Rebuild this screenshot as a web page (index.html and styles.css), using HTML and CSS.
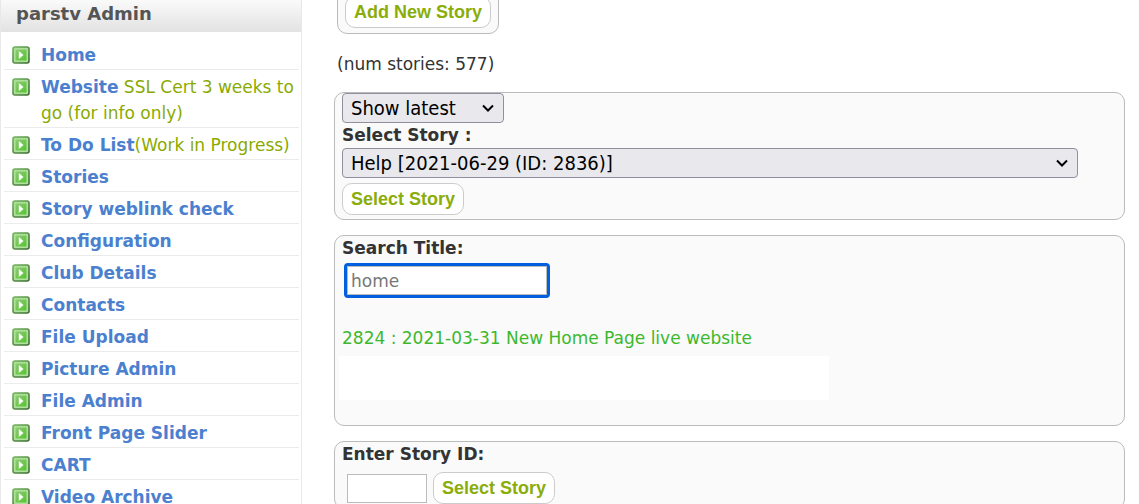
FILE: index.html
```html
<!DOCTYPE html>
<html lang="en">
<head>
    <meta charset="UTF-8">
    <meta name="viewport" content="width=device-width, initial-scale=1.0">
    <title>parstv Admin</title>
    <link rel="stylesheet" href="styles.css">
</head>
<body>
    <!-- Bullet used by every menu item -->
    <svg class="defs" width="0" height="0" aria-hidden="true">
        <linearGradient id="bulletFill" x1="0" y1="0" x2="1" y2="1">
            <stop offset="0" stop-color="#8fca78"/>
            <stop offset="1" stop-color="#52c42c"/>
        </linearGradient>
        <linearGradient id="bulletEdge" x1="0" y1="0" x2="1" y2="1">
            <stop offset="0" stop-color="#6fb45c"/>
            <stop offset="1" stop-color="#3c6b31"/>
        </linearGradient>
        <symbol id="bullet" viewBox="0 0 18 18">
            <rect x="1" y="1" width="16" height="16" rx="2" fill="#a9dd94" stroke="url(#bulletEdge)" stroke-width="1.6"/>
            <rect x="3" y="3" width="12" height="12" rx="1" fill="url(#bulletFill)" stroke="#b5e3a2" stroke-width="1"/>
            <path d="M6.8 5 L11.5 9 L6.8 13 Z" fill="#fff"/>
        </symbol>
        <symbol id="chevron" viewBox="0 0 12 8">
            <path d="M1 1.5 L6 6.5 L11 1.5" fill="none" stroke="#000" stroke-width="2"/>
        </symbol>
    </svg>

    <div class="page">
        <!-- Side menu -->
        <nav class="sidebar">
            <h2 class="sidebar-title">parstv Admin</h2>
            <ul class="menu">
                <li><svg class="bullet"><use href="#bullet"/></svg><div><a href="#">Home</a></div></li>
                <li><svg class="bullet"><use href="#bullet"/></svg><div><a href="#">Website</a> SSL Cert 3 weeks to go (for info only)</div></li>
                <li><svg class="bullet"><use href="#bullet"/></svg><div><a href="#">To Do List</a>(Work in Progress)</div></li>
                <li><svg class="bullet"><use href="#bullet"/></svg><div><a href="#">Stories</a></div></li>
                <li><svg class="bullet"><use href="#bullet"/></svg><div><a href="#">Story weblink check</a></div></li>
                <li><svg class="bullet"><use href="#bullet"/></svg><div><a href="#">Configuration</a></div></li>
                <li><svg class="bullet"><use href="#bullet"/></svg><div><a href="#">Club Details</a></div></li>
                <li><svg class="bullet"><use href="#bullet"/></svg><div><a href="#">Contacts</a></div></li>
                <li><svg class="bullet"><use href="#bullet"/></svg><div><a href="#">File Upload</a></div></li>
                <li><svg class="bullet"><use href="#bullet"/></svg><div><a href="#">Picture Admin</a></div></li>
                <li><svg class="bullet"><use href="#bullet"/></svg><div><a href="#">File Admin</a></div></li>
                <li><svg class="bullet"><use href="#bullet"/></svg><div><a href="#">Front Page Slider</a></div></li>
                <li><svg class="bullet"><use href="#bullet"/></svg><div><a href="#">CART</a></div></li>
                <li><svg class="bullet"><use href="#bullet"/></svg><div><a href="#">Video Archive</a></div></li>
            </ul>
        </nav>

        <!-- Story forms -->
        <main class="content">
            <form class="box add-box">
                <button type="button" class="btn">Add New Story</button>
            </form>

            <p class="count">(num stories: 577)</p>

            <form class="box select-box">
                <div class="select select-filter">
                    <select aria-label="Filter stories">
                        <option>Show latest</option>
                    </select>
                    <svg class="chevron"><use href="#chevron"/></svg>
                </div>
                <label class="label" for="story">Select Story :</label>
                <div class="select select-story">
                    <select id="story">
                        <option>Help [2021-06-29 (ID: 2836)]</option>
                    </select>
                    <svg class="chevron"><use href="#chevron"/></svg>
                </div>
                <button type="button" class="btn">Select Story</button>
            </form>

            <form class="box search-box">
                <label class="label" for="search">Search Title:</label>
                <input class="field search-field" type="text" id="search" value="home">
                <a class="result" href="#">2824 : 2021-03-31 New Home Page live website</a>
                <div class="blank"></div>
            </form>

            <form class="box">
                <label class="label" for="storyId">Enter Story ID:</label>
                <div class="id-row">
                    <input class="field id-field" type="text" id="storyId">
                    <button type="button" class="btn">Select Story</button>
                </div>
            </form>
        </main>
    </div>
</body>
</html>
```
FILE: styles.css
```css
* {
    margin: 0;
    padding: 0;
    box-sizing: border-box;
}

body {
    background: #fff;
    color: #333;
    font-family: Verdana, 'DejaVu Sans', sans-serif;
    font-size: 17px;
    line-height: 25px;
}

a {
    text-decoration: none;
}

.defs {
    position: absolute;
}

.page {
    display: flex;
    height: 100vh;
    overflow: hidden;
}

/* Side menu */
.sidebar {
    flex: 0 0 302px;
    border: 1px solid #e8e8e8;
    border-width: 0 1px;
}

.sidebar-title {
    height: 32px;
    padding-left: 15px;
    background: linear-gradient(#fafafa, #e2e2e2);
    color: #555;
    font-size: 18px;
    line-height: 27px;
}

.menu {
    padding: 6px 2px 0 3px;
    list-style: none;
}

.menu li {
    display: flex;
    gap: 11px;
    padding: 4px 0 1px 8px;
    border-bottom: 1px solid #ebebeb;
    color: #8aaa00;
    line-height: 26px;
}

.menu a {
    color: #4b80cf;
    font-weight: bold;
}

.bullet {
    flex: none;
    width: 18px;
    height: 18px;
    margin-top: 4px;
}

/* Content */
.content {
    flex: 1;
    min-width: 0;
    padding: 0 14px 0 32px;
}

.box {
    display: flex;
    flex-direction: column;
    align-items: flex-start;
    margin-bottom: 15px;
    padding: 0 7px 4px;
    background: #fafafa;
    border: 1px solid #bbb;
    border-radius: 10px;
}

/* The top of this box is scrolled out of view */
.add-box {
    width: fit-content;
    margin: -10px 0 18px 3px;
    padding: 5px 7px;
}

.count {
    margin: 0 0 15px 3px;
}

.label {
    font-weight: bold;
}

.btn {
    height: 32px;
    padding: 0 8px;
    background: #fff;
    border: 1px solid #ccc;
    border-radius: 10px;
    color: #8aad0a;
    font: bold 18px Arial, 'Liberation Sans', sans-serif;
    cursor: pointer;
}

/* Drop-downs */
.select {
    position: relative;
}

.select select {
    appearance: none;
    display: block;
    width: 100%;
    height: 30px;
    padding: 0 32px 0 8px;
    background: #e9e9ed;
    border: 1px solid #8f8f9d;
    border-radius: 4px;
    color: #000;
    font: 20px Tahoma, 'DejaVu Sans Condensed', 'Noto Sans', sans-serif;
}

.select-filter {
    width: 162px;
}

.select-story {
    width: 95%;
    margin-bottom: 5px;
}

.chevron {
    position: absolute;
    top: 11px;
    right: 10px;
    width: 12px;
    height: 8px;
    pointer-events: none;
}

/* Text fields */
.field {
    height: 29px;
    padding: 0 3px;
    background: #fff;
    border: 1px solid #bbb;
    color: #777;
    font: inherit;
}

.search-box {
    padding-bottom: 25px;
}

.search-field {
    width: 200px;
    margin: 5px 0 31px 5px;
    outline: 3px solid #0060df;
    border-radius: 1px;
}

.result {
    color: #3cb82c;
}

.blank {
    width: 490px;
    max-width: 100%;
    height: 44px;
    margin: 5px 0 0 -3px;
    background: #fff;
}

.id-row {
    display: flex;
    align-items: center;
    gap: 6px;
    margin: 5px 0 0 5px;
}

.id-field {
    width: 80px;
}
```
